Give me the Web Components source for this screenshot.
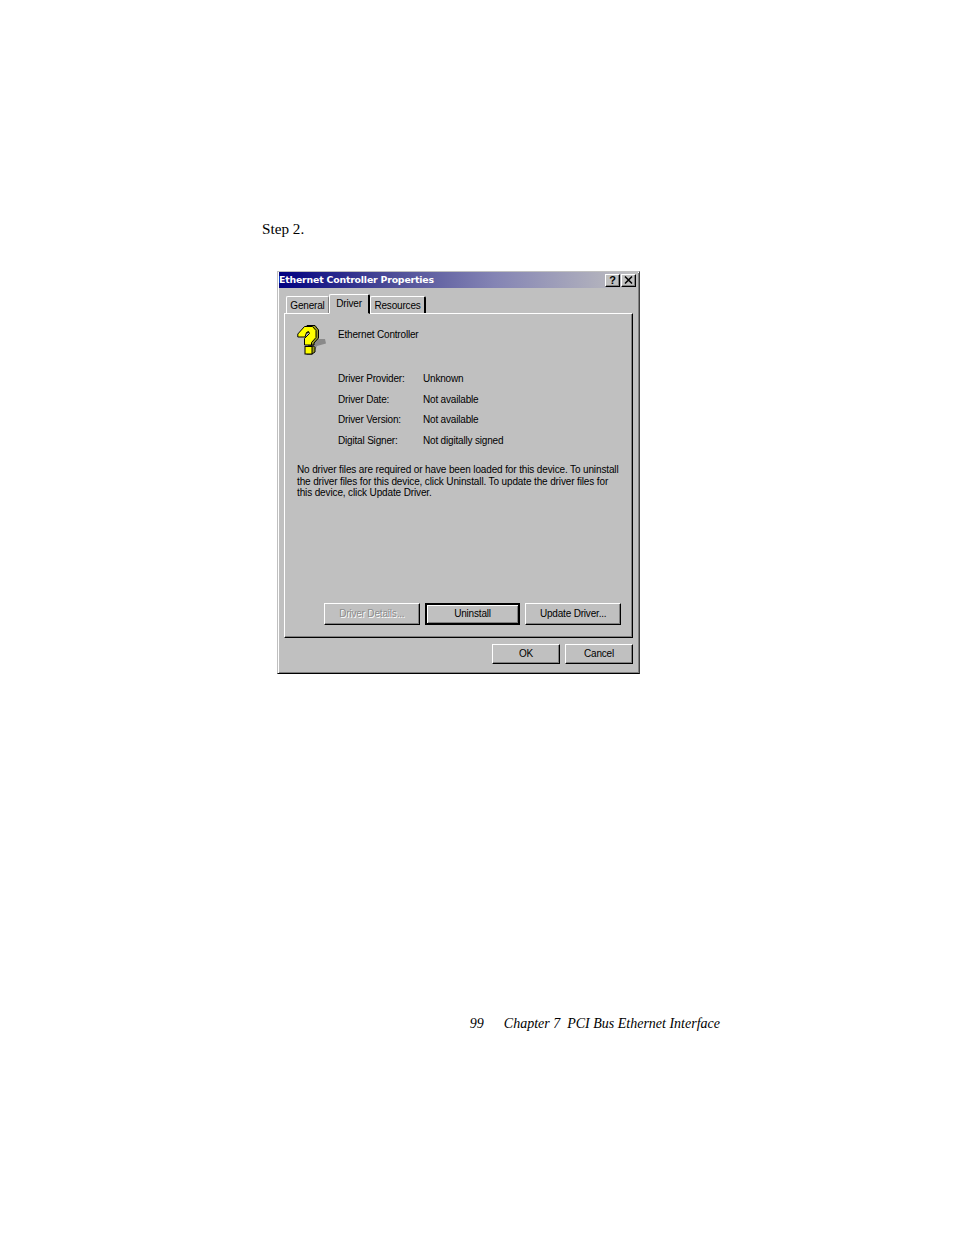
<!DOCTYPE html>
<html><head><meta charset="utf-8"><style>
html,body{margin:0;padding:0;background:#fff}
</style></head><body>
<doc-page>
<win-dialog></win-dialog>
</doc-page>
<script>
const uiFont=`font:10px/12px "Liberation Sans",sans-serif;letter-spacing:-.18px;`;
const bevel=`background:#c0c0c0;border:1px solid;border-color:#fff #000 #000 #fff;box-shadow:inset -1px -1px 0 #808080;box-sizing:border-box;`;
class DocPage extends HTMLElement{constructor(){super();this.attachShadow({mode:'open'}).innerHTML=`<style>
:host{display:block;width:954px;height:1235px;box-sizing:border-box;padding-top:220px;font-family:"Liberation Serif",serif;color:#000;background:#fff;overflow:hidden}
.step{margin-left:262px;font-size:15.200px;line-height:17px;height:17px}
.wrap{margin:34px 0 0 277px}
.foot{margin:342px 234px 0 0;display:flex;justify-content:flex-end;font-style:italic;font-size:14px;line-height:16px;white-space:pre}
.foot span:first-child{margin-right:20px}
</style><div class="step">Step 2.</div><div class="wrap"><slot></slot></div><div class="foot"><span>99</span><span>Chapter 7  PCI Bus Ethernet Interface</span></div>`;}}
customElements.define('doc-page',DocPage);

class WinButton extends HTMLElement{constructor(){super();this.attachShadow({mode:'open'}).innerHTML=`<style>
:host{display:flex;align-items:center;justify-content:center;${bevel}${uiFont}color:#000;white-space:nowrap}
:host([default]){border:2px solid #000;box-shadow:inset 1px 1px 0 #fff,inset -1px -1px 0 #808080}
:host([disabled]){color:#8c8c8c;text-shadow:1px 1px 0 #fff}
</style><slot></slot>`;}}
customElements.define('win-button',WinButton);

class WinTab extends HTMLElement{constructor(){super();this.attachShadow({mode:'open'}).innerHTML=`<style>
:host{display:flex;align-items:center;justify-content:center;box-sizing:border-box;height:17px;padding-top:1px;background:#c0c0c0;border-top:1px solid #fff;border-left:1px solid #fff;border-right:1px solid #808080;border-radius:2px 2px 0 0;${uiFont}white-space:nowrap;color:#000}
:host([dark]){border-right:2px solid #000}
:host([active]){height:20px;padding-top:0;padding-bottom:0;position:relative;z-index:1;margin-bottom:-1px;border-bottom:1px solid #c0c0c0;border-right:2px solid #000}
</style><slot></slot>`;}}
customElements.define('win-tab',WinTab);

class WinTitle extends HTMLElement{constructor(){super();this.attachShadow({mode:'open'}).innerHTML=`<style>
:host{display:flex;align-items:center;height:16px;box-sizing:border-box;padding:0 2px 0 0;background:linear-gradient(90deg,#000080 0%,#4a4a96 30%,#8484b4 60%,#c0c0c0 100%);color:#fff;font:bold 9.4px/12px "DejaVu Sans",sans-serif;white-space:nowrap}
.t{flex:1;letter-spacing:-.2px}
.b{width:15px;height:13px;display:flex;align-items:center;justify-content:center;${bevel}color:#000}
.b+.b{margin-left:1px}
.q{font:bold 11px/11px "Liberation Sans",sans-serif}
svg{display:block}
</style><span class="t"><slot></slot></span><span class="b q">?</span><span class="b"><svg width="9" height="8" viewBox="0 0 9 8"><path d="M1 0.5 L8 7.5 M8 0.5 L1 7.5" stroke="#000" stroke-width="1.5"/></svg></span>`;}}
customElements.define('win-title',WinTitle);

class QIcon extends HTMLElement{constructor(){super();this.attachShadow({mode:'open'}).innerHTML=`<style>:host{display:block;width:32px;height:32px}svg{display:block}</style>
<svg width="32" height="32" viewBox="0 0 32 32">
<path d="M13 14 L28 14 L29 18.500 L20 21 L17 27 L13 25 Z" fill="#8a8a8a"/>
<path d="M5 6 L10 0.500 L18 0.500 L21.500 5 L21.500 13 L17 18 L17 20 L11 20 L11 14 L15 9 L14 6 L10 8 Z" fill="#9a9a20" stroke="#000" stroke-width="1"/>
<path d="M0.800 9 L7.500 1.500 L15.500 1.500 L19 5.500 L19 12.500 L14.500 17.500 L14.500 20 L7.500 20 L7.500 13.500 L12.500 8.500 L11.500 6.500 L9.500 7.500 L8 12 L0.800 12 Z" fill="#ffff00" stroke="#000" stroke-width="1" stroke-linejoin="round"/>
<path d="M9.500 21.500 L16.500 21 L18 22.500 L18 27 L15 29 L9.500 29 Z" fill="#9a9a20" stroke="#000" stroke-width="1"/>
<rect x="8" y="21.500" width="7" height="7.500" fill="#ffff00" stroke="#000" stroke-width="1"/>
</svg>`;}}
customElements.define('q-icon',QIcon);

class WinDialog extends HTMLElement{constructor(){super();this.attachShadow({mode:'open'}).innerHTML=`<style>
:host{display:block;width:363px;height:403px;box-sizing:border-box;background:#c0c0c0;border:1px solid;border-color:#c0c0c0 #404040 #000 #c0c0c0;box-shadow:inset 1px 1px 0 #fff,inset -1px -1px 0 #808080;padding:0 1px;${uiFont}color:#000}
.tabs{display:flex;align-items:flex-end;height:25px;margin:0 0 0 7px}
.tabs win-tab:nth-child(1){width:43px}
.tabs win-tab:nth-child(2){width:41px}
.tabs win-tab:nth-child(3){width:56px}
.panel{margin-left:5px;width:349px;height:325px;box-sizing:border-box;border:1px solid;border-color:#fff #000 #000 #fff;box-shadow:inset -1px -1px 0 #808080;padding:13px 11px 12px 12px;display:flex;flex-direction:column}
.head{display:flex;height:33px}
.head q-icon{margin:-2px 9px 0 0}
.name{margin-top:2px}
.grid{margin:9px 0 0 41px;display:grid;grid-template-columns:85px 1fr;grid-auto-rows:20.6px;align-items:center}
.msg{margin-top:12.500px;line-height:11.700px;white-space:pre;letter-spacing:-.13px}
.row{margin-top:auto;display:flex;margin-left:27px;gap:5px}
.row win-button{width:96px;height:22px}
.foot{display:flex;justify-content:flex-end;gap:5px;margin:6px 0 0;padding-right:5px}
.foot win-button{width:68px;height:20px}
</style>
<win-title>Ethernet Controller Properties</win-title>
<div class="tabs"><win-tab>General</win-tab><win-tab active>Driver</win-tab><win-tab dark>Resources</win-tab></div>
<div class="panel">
<div class="head"><q-icon></q-icon><div class="name">Ethernet Controller</div></div>
<div class="grid"><span>Driver Provider:</span><span>Unknown</span><span>Driver Date:</span><span>Not available</span><span>Driver Version:</span><span>Not available</span><span>Digital Signer:</span><span>Not digitally signed</span></div>
<div class="msg">No driver files are required or have been loaded for this device. To uninstall
the driver files for this device, click Uninstall. To update the driver files for
this device, click Update Driver.</div>
<div class="row"><win-button disabled>Driver Details...</win-button><win-button default>Uninstall</win-button><win-button>Update Driver...</win-button></div>
</div>
<div class="foot"><win-button>OK</win-button><win-button>Cancel</win-button></div>`;}}
customElements.define('win-dialog',WinDialog);
</script>
</body></html>
